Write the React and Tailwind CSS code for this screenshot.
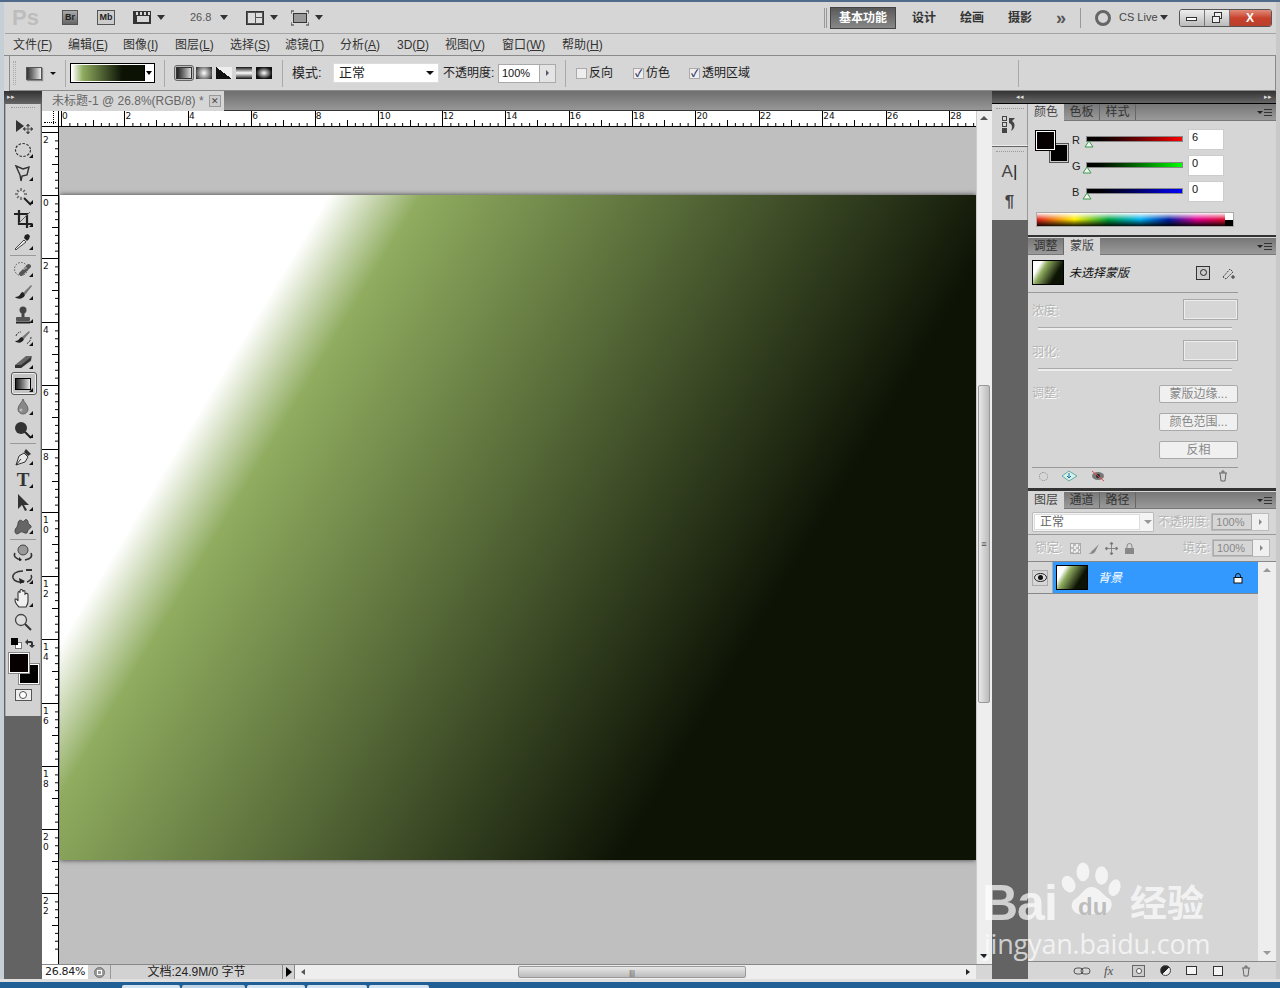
import React from "react";

const F = '[font-family:"Liberation_Sans","Noto_Sans_CJK_SC",sans-serif]';

function Caret({ className = "" }) {
  return <span className={"inline-block w-0 h-0 border-l-[4px] border-r-[4px] border-t-[5px] border-l-transparent border-r-transparent border-t-[#333] " + className} />;
}
function Mini() {
  return <span className="absolute right-[7px] bottom-[3px] w-0 h-0 border-l-[4px] border-l-transparent border-b-[4px] border-b-[#111]" />;
}
function Tool({ children, sel, noMini }) {
  return (
    <div className="relative h-[23px] w-full flex items-center justify-center">
      {sel && <div className="absolute left-[5px] top-0 w-[26px] h-[23px] rounded-[3px] border border-[#555] bg-[#c4c4c4] shadow-[inset_0_0_0_1px_#eee]" />}
      <div className="relative flex items-center justify-center">{children}</div>
      {!noMini && <Mini />}
    </div>
  );
}
const S = ({ children, w = 20, h = 20 }) => <svg width={w} height={h} viewBox={`0 0 ${w} ${h}`} fill="none">{children}</svg>;
const Sep = () => <div className="h-[4px] flex items-center mx-[4px]"><div className="w-full h-px bg-[#999]" /></div>;

function Toolbar() {
  return (
    <div className="w-[36px] ml-[1px] bg-[#d2d2d2] border-x border-[#aaa] flex flex-col h-[612px] shrink-0">
      <div className="h-[8px] mx-[5px] mt-[3px] border-t border-dotted border-[#999]" />
      <Tool noMini><S w={24}><path d="M5 3v12l8-6z" fill="#333" /><path d="M17 8v8M13 12h8M17 7l-1.500 2h3zM17 17l-1.500-2h3zM12 12l2-1.500v3zM22 12l-2-1.500v3z" stroke="#444" fill="#444" strokeWidth=".8" /></S></Tool>
      <Tool><S><ellipse cx="10" cy="10" rx="7.500" ry="6.500" stroke="#333" strokeWidth="1.200" strokeDasharray="2.500 1.500" /></S></Tool>
      <Tool><S><path d="M3 3l7 3 6-2-2 8-5 1-1 5-1-6z" stroke="#333" strokeWidth="1.400" /></S></Tool>
      <Tool><S><path d="M11 12l7 7" stroke="#222" strokeWidth="2" /><path d="M8 2v3M8 11v3M2 8h3M11 8h3M4 4l2 2M12 4l-2 2M4 12l2-2" stroke="#666" strokeWidth="1.500" /><circle cx="8" cy="8" r="2.500" fill="#ddd" /></S></Tool>
      <Tool><S><path d="M6 1v14h13M1 5h13v14" stroke="#222" strokeWidth="2.200" /><path d="M6 14L17 3" stroke="#666" /></S></Tool>
      <Tool><S><path d="M4 17l-1 1-1-1 1-1 8-8 2 2z" fill="#eee" stroke="#444" /><path d="M11 6l3 3 2-2 1-3-2-2-3 1z" fill="#222" /></S></Tool>
      <Sep />
      <Tool><S><circle cx="8" cy="10" r="6.500" stroke="#555" strokeDasharray="1.500 1.500" /><path d="M6 14L15 5a2.500 2.500 0 0 1 3 3L9 17a2.500 2.500 0 0 1-3-3z" fill="#555" /><circle cx="11" cy="10" r=".8" fill="#ddd" /><circle cx="13" cy="9" r=".8" fill="#ddd" /></S></Tool>
      <Tool><S><path d="M10 11L18 3l1 1-7 9z" fill="#777" /><path d="M10 10c-3 0-2 5-8 5 2 2 8 3 10-2z" fill="#222" /></S></Tool>
      <Tool><S><circle cx="10" cy="5" r="3.500" fill="#444" /><rect x="8.500" y="7" width="3" height="6" fill="#444" /><rect x="3" y="12" width="14" height="4" rx="1" fill="#555" /><rect x="3" y="16.500" width="14" height="2" fill="#222" /></S></Tool>
      <Tool><S><path d="M9 9L16 3l1 1-6 7z" fill="#777" /><path d="M9 9c-3 0-2 4-7 4 2 2 7 3 9-2z" fill="#222" /><path d="M3 8c1-3 3-4 5-4M18 9c0 3-2 6-5 7" stroke="#333" strokeDasharray="2 1" /></S></Tool>
      <Tool><S><path d="M2 14L13 5h6l-1 5L8 17H2z" fill="#666" /><path d="M2 14h6v3H2zM8 14L18 6v3L8 17z" fill="#333" /></S></Tool>
      <Tool sel><div className="w-[16px] h-[12px] border border-black bg-gradient-to-r from-[#222] to-[#eee]" /></Tool>
      <Tool><S><path d="M10 2c1 4 5 6 5 10a5 5 0 0 1-10 0c0-4 4-6 5-10z" fill="#888" stroke="#666" /><circle cx="8" cy="13" r="1.500" fill="#bbb" /></S></Tool>
      <Tool><S><circle cx="8" cy="8" r="6" fill="#333" /><path d="M12 12l6 6" stroke="#222" strokeWidth="2" /></S></Tool>
      <Sep />
      <Tool><S><path d="M3 18l3-9 5-3 4 4-3 5z" fill="#e8e8e8" stroke="#333" /><path d="M11 5l2-3 5 5-3 2z" fill="#333" /><path d="M3 18l5-6" stroke="#333" /></S></Tool>
      <Tool><span className="text-[19px] leading-none font-bold text-[#333] [font-family:'Liberation_Serif',serif]">T</span></Tool>
      <Tool><S><path d="M5 1v15l4-4 3 6 2-1-3-5h5z" fill="#333" /></S></Tool>
      <Tool><S><path d="M2 15c0-3 3-4 3-7s2-5 4-3 3-3 5-1 0 3 3 5-1 4-2 5 0 4-3 3-3-2-6 0-4 0-4-2z" fill="#666" stroke="#444" /></S></Tool>
      <Sep />
      <Tool noMini><S w={22}><circle cx="11" cy="7" r="5" fill="#999" stroke="#444" /><path d="M9 17C4 16 1 13 3 10M13 17c5-1 8-3 6-7" stroke="#333" strokeWidth="1.500" /><path d="M7 14l3 3-3 1z" fill="#222" /></S></Tool>
      <Tool><S w={24}><path d="M15 3h6v2h-6z" fill="#333" /><path d="M12 5C5 5 1 8 2 12c1 3 6 5 11 4M20 9c2 3-1 6-4 7" stroke="#333" strokeWidth="1.500" /><path d="M8 12l6 3-5 3z" fill="#222" /></S></Tool>
      <Tool><S><path d="M6 18c-2-2-4-5-4-7s2-1 3 1V4c0-2 2-2 2 0V2c0-2 2-2 3 0v1c0-2 2-2 2 0v2c1-1 3-1 3 1v6c0 3-1 4-2 6z" fill="#f0f0f0" stroke="#333" strokeWidth="1.100" /></S></Tool>
      <Tool noMini><S><circle cx="8" cy="8" r="5.500" fill="#ddd" stroke="#444" strokeWidth="1.300" /><path d="M12 12l6 6" stroke="#333" strokeWidth="2" /></S></Tool>
      <div className="relative h-[20px] flex items-center justify-between px-[5px]">
        <div className="relative w-[11px] h-[11px]"><div className="absolute right-0 bottom-0 w-[7px] h-[7px] bg-white border border-[#777]" /><div className="absolute left-0 top-0 w-[7px] h-[7px] bg-black" /></div>
        <S w={12} h={12}><path d="M2 5l3-3v2h3a2 2 0 0 1 2 2v2h2l-3 3-3-3h2V6H5v2z" fill="#333" /></S>
      </div>
      <div className="relative h-[32px]">
        <div className="absolute left-[13px] top-[11px] w-[20px] h-[20px] bg-black border border-white outline outline-1 outline-[#888]" />
        <div className="absolute left-[3px] top-0 w-[20px] h-[20px] bg-[#060000] border border-white outline outline-1 outline-[#888]" />
      </div>
      <div className="h-[20px] flex items-center justify-center">
        <div className="w-[17px] h-[12px] bg-[#eee] border border-[#555] flex items-center justify-center"><div className="w-[8px] h-[8px] rounded-full border border-[#555] bg-white" /></div>
      </div>
    </div>
  );
}

function TopRuler() {
  const nums = [0, 2, 4, 6, 8, 10, 12, 14, 16, 18, 20, 22, 24, 26, 28];
  return (
    <div className="flex h-[16px] bg-white border-b border-black overflow-hidden pl-[2px]">
      {nums.map((n) => (
        <div key={n} className="relative shrink-0 w-[63.45px] h-full border-l border-black">
          <span className="absolute left-0 top-0 text-[9px] leading-[10px] text-[#111] [font-family:'DejaVu_Sans',sans-serif]">{n}</span>
          <svg className="absolute left-0 bottom-0" width="63" height="6" viewBox="0 0 63.600 6">
            {[1, 2, 3, 4, 5, 6, 7].map((i) => <line key={i} x1={i * 7.95} x2={i * 7.95} y1={i === 4 ? 0 : 3} y2="6" stroke="#000" />)}
          </svg>
        </div>
      ))}
    </div>
  );
}
function LeftRuler() {
  const nums = [["2"], ["0"], ["2"], ["4"], ["6"], ["8"], ["1", "0"], ["1", "2"], ["1", "4"], ["1", "6"], ["1", "8"], ["2", "0"], ["2", "2"]];
  return (
    <div className="w-[17px] shrink-0 bg-white border-r border-black overflow-hidden flex flex-col pt-[4.6px]">
      {nums.map((n, k) => (
        <div key={k} className="relative shrink-0 h-[63.45px] border-t border-black">
          <div className="absolute left-[1px] top-[2px] text-[9px] leading-[10px] text-[#111] [font-family:'DejaVu_Sans',sans-serif]">
            {n.map((d, i) => <div key={i}>{d}</div>)}
          </div>
          <svg className="absolute right-0 top-0" width="6" height="63" viewBox="0 0 6 63.600">
            {[1, 2, 3, 4, 5, 6, 7].map((i) => <line key={i} y1={i * 7.95} y2={i * 7.95} x1={i === 4 ? 0 : 3} x2="6" stroke="#000" />)}
          </svg>
        </div>
      ))}
    </div>
  );
}

function Doc() {
  return (
    <div className="w-[950px] shrink-0 flex flex-col min-h-0">
      <div className="h-[20px] flex bg-gradient-to-b from-[#6e6e6e] to-[#979797] border-b border-[#333]">
        <div className="w-[182px] h-[20px] bg-[#d6d6d6] flex items-center pl-[10px] text-[12px] text-[#666] whitespace-nowrap">
          未标题-1 @ 26.8%(RGB/8) *
          <span className="ml-[5px] w-[12px] h-[12px] border border-[#999] bg-[#ccc] flex items-center justify-center text-[9px] leading-none text-[#444]">✕</span>
        </div>
      </div>
      <div className="flex-1 flex min-h-0">
        <div className="w-[934px] flex flex-col min-h-0">
          <div className="flex h-[16px] shrink-0">
            <div className="w-[17px] shrink-0 bg-white border-r border-b border-black relative">
              <div className="absolute left-[11px] top-0 h-[13px] border-l border-dotted border-black" />
              <div className="absolute left-[2px] top-[11px] w-[12px] border-t border-dotted border-black" />
            </div>
            <div className="flex-1 min-w-0"><TopRuler /></div>
          </div>
          <div className="flex-1 flex min-h-0">
            <LeftRuler />
            <div className="flex-1 min-w-0 bg-[#bfbfbf] pt-[68px] pl-px overflow-hidden">
              <div className="h-[665px] bg-[linear-gradient(121deg,#ffffff_20.5%,#8fac5f_27.5%,#0d1305_73%,#0d1305_100%)] shadow-[0_0_5px_rgba(0,0,0,0.7)]" />
            </div>
          </div>
          <div className="h-[15px] shrink-0 flex border-t border-[#888] bg-[#d2d2d2] text-[12px] text-[#222]">
            <div className="w-[46px] pl-[3px] bg-white leading-[14px] text-[11px] [font-family:'DejaVu_Sans',sans-serif] tracking-[-0.3px]">26.84%</div>
            <div className="w-[23px] flex items-center justify-center border-r border-[#999]"><div className="w-[11px] h-[11px] rounded-full bg-[#999] border border-[#777] flex items-center justify-center"><div className="w-[5px] h-[5px] border border-white" /></div></div>
            <div className="w-[171px] text-center leading-[14px] whitespace-nowrap">文档:24.9M/0 字节</div>
            <div className="w-[13px] flex items-center justify-center border-x border-[#888]"><span className="w-0 h-0 border-y-[5px] border-y-transparent border-l-[6px] border-l-black" /></div>
            <div className="flex-1 bg-[#eee] relative flex items-center">
              <span className="ml-[6px] w-0 h-0 border-y-[3px] border-y-transparent border-r-[4px] border-r-[#555]" />
              <div className="absolute left-[223px] top-[1px] w-[228px] h-[12px] rounded-[2px] border border-[#999] bg-gradient-to-b from-[#e8e8e8] to-[#bbb] flex items-center justify-center text-[7px] leading-none text-[#444]">|||</div>
              <span className="absolute right-[6px] w-0 h-0 border-y-[3px] border-y-transparent border-l-[4px] border-l-[#222]" />
            </div>
          </div>
        </div>
        <div className="w-[16px] shrink-0 flex flex-col min-h-0">
          <div className="flex-1 bg-[#eee] relative border-l border-[#ccc]">
            <span className="absolute left-[3px] top-[5px] w-0 h-0 border-x-[4px] border-x-transparent border-b-[4px] border-b-[#555]" />
            <div className="absolute left-[1px] top-[274px] w-[12px] h-[318px] rounded-[2px] border border-[#999] bg-gradient-to-r from-[#e8e8e8] to-[#bbb] flex items-center justify-center text-[9px] leading-none text-[#444]">≡</div>
            <span className="absolute left-[3px] bottom-[6px] w-0 h-0 border-x-[4px] border-x-transparent border-t-[4px] border-t-[#222]" />
          </div>
          <div className="h-[15px] bg-[#d6d6d6] border-t border-[#888]" />
        </div>
      </div>
    </div>
  );
}

function PanelMenu() {
  return (
    <div className="ml-auto mr-[4px] flex items-center gap-px">
      <span className="w-0 h-0 border-x-[3px] border-x-transparent border-t-[3px] border-t-[#222]" />
      <span className="w-[8px] h-[7px] border-y border-[#333] relative"><span className="absolute left-0 right-0 top-[2px] h-px bg-[#333]" /></span>
    </div>
  );
}
function Tabs({ items, active }) {
  return (
    <div className="h-[17px] shrink-0 flex bg-gradient-to-b from-[#777] to-[#9a9a9a] border-b border-[#777] text-[12px]">
      {items.map((t, i) => (
        <div key={t} className={"w-[36px] leading-[16px] text-center " + (i === active ? "bg-[#d6d6d6] text-[#444] h-[17px]" : "text-[#333] border-r border-[#666]")}>{t}</div>
      ))}
      <PanelMenu />
    </div>
  );
}
const Dis = "text-[12px] text-[#b4b4b4] [text-shadow:1px_1px_0_#fff]";

function Slider({ label, color, pos, val }) {
  return (
    <div className="flex items-center h-[26px]">
      <span className="w-[11px] text-[11px] text-[#222] mt-[2px]">{label}</span>
      <div className="relative ml-[3px] w-[97px] h-[6px] border border-[#888]">
        <div className={"w-full h-full " + color} />
        <svg className={"absolute top-[3px] " + pos} width="10" height="8" viewBox="0 0 10 8"><path d="M5 1L9 7H1z" fill="#f4f4f4" stroke="#3a9a4a" /></svg>
      </div>
      <div className="ml-[5px] w-[36px] h-[21px] bg-white border border-[#ccc] text-[11px] leading-[15px] pl-[3px] text-[#111]">{val}</div>
    </div>
  );
}
function MaskBtn({ children }) {
  return <div className="w-[79px] h-[18px] rounded-[2px] border border-[#aaa] bg-[#f0f0f0] text-center text-[12px] leading-[16px] text-[#888]">{children}</div>;
}
function Thumb({ className }) {
  return <div className={"h-[25px] w-[32px] border border-black bg-[linear-gradient(121deg,#ffffff_20%,#8fac5f_35%,#0c1204_72%)] " + className} />;
}

function Panels() {
  return (
    <div className="w-[248px] shrink-0 flex flex-col min-h-0 text-[#333]">
      <div className="h-[133px] shrink-0 flex flex-col bg-[#d6d6d6] border-b-[2px] border-[#333]">
        <Tabs items={["颜色", "色板", "样式"]} active={0} />
        <div className="flex pt-[5px] pl-[8px]">
          <div className="relative w-[32px] h-[34px] mt-[5px]">
            <div className="absolute left-[14px] top-[13px] w-[18px] h-[18px] bg-black border border-[#ccc] outline outline-1 outline-[#555]" />
            <div className="absolute left-0 top-0 w-[19px] h-[19px] bg-[#060000] border border-white outline outline-1 outline-black" />
          </div>
          <div className="ml-[4px] flex flex-col">
            <Slider label="R" val="6" pos="left-[-3px]" color="bg-gradient-to-r from-black to-[#ff0000]" />
            <Slider label="G" val="0" pos="left-[-5px]" color="bg-gradient-to-r from-black to-[#00ff00]" />
            <Slider label="B" val="0" pos="left-[-5px]" color="bg-gradient-to-r from-black to-[#0000ff]" />
          </div>
        </div>
        <div className="ml-[8px] mt-[8px] w-[198px] h-[15px] flex border border-[#aaa]">
          <div className="flex-1 bg-[linear-gradient(to_bottom,rgba(255,255,255,0.95),rgba(255,255,255,0)_50%,rgba(0,0,0,0)_50%,rgba(0,0,0,0.9)),linear-gradient(to_right,#e02020,#ffee00_20%,#00a040_38%,#00b0f0_55%,#0020a0_70%,#e00090_85%,#e01030)]" />
          <div className="w-[8px] flex flex-col"><div className="h-1/2 bg-white" /><div className="h-1/2 bg-black" /></div>
        </div>
      </div>
      <div className="h-[253px] shrink-0 mt-px flex flex-col bg-[#d6d6d6] border-b-[3px] border-[#333]">
        <Tabs items={["调整", "蒙版"]} active={1} />
        <div className="flex items-center h-[38px] pb-[2px] pl-[4px] border-b border-[#999] w-[210px]">
          <Thumb className="" />
          <span className="ml-[5px] text-[12px] italic text-[#111]">未选择蒙版</span>
          <div className="ml-[auto] mr-[3px] flex items-center gap-[11px]">
            <div className="w-[14px] h-[14px] border border-[#333] bg-[#ccc] flex items-center justify-center"><div className="w-[7px] h-[7px] rounded-full border border-[#222]" /></div>
            <S w={14} h={14}><path d="M2 11L9 3l3 3-7 7z" stroke="#444" strokeDasharray="2 1" /><path d="M10 11h4M12 9v4" stroke="#333" /></S>
          </div>
        </div>
        <div className="flex flex-col pl-[4px] w-[210px]">
          <div className="flex items-center justify-between h-[21px] mt-[6px]">
            <span className={Dis + " pt-[2px]"}>浓度:</span>
            <div className="w-[55px] h-[21px] border border-[#aaa] shadow-[inset_0_0_0_1px_#eee]" />
          </div>
          <div className="h-[3px] ml-[6px] w-[194px] mt-[7px] bg-[#eee] border-t border-[#aaa]" />
          <div className="flex items-center justify-between h-[21px] mt-[10px]">
            <span className={Dis + " pt-[2px]"}>羽化:</span>
            <div className="w-[55px] h-[21px] border border-[#aaa] shadow-[inset_0_0_0_1px_#eee]" />
          </div>
          <div className="h-[3px] ml-[6px] w-[194px] mt-[7px] bg-[#eee] border-t border-[#aaa]" />
          <div className="flex justify-between mt-[14px]">
            <span className={Dis + " leading-[16px]"}>调整:</span>
            <div className="flex flex-col gap-[10px]">
              <MaskBtn>蒙版边缘...</MaskBtn>
              <MaskBtn>颜色范围...</MaskBtn>
              <MaskBtn>反相</MaskBtn>
            </div>
          </div>
          <div className="h-[17px] mt-[8px] border-t border-[#999] flex items-center pl-[7px] gap-[13px] relative">
            <span className="w-[9px] h-[9px] rounded-full border border-dotted border-[#888]" />
            <S w={17} h={12}><path d="M1 6l7-5 8 5-8 5z" fill="#d8efe6" stroke="#6aa" /><path d="M8 3v5M6 6l2 2 2-2" stroke="#17a" /></S>
            <S w={14} h={12}><ellipse cx="7" cy="6" rx="6" ry="4" fill="#777" /><circle cx="7" cy="6" r="2" fill="#222" /><path d="M1 1l12 10" stroke="#e44" /></S>
            <span className="absolute right-[9px] top-[2px]"><S w={12} h={12}><path d="M2 3h8M3 3l1 8h4l1-8M5 3V1h2v2" stroke="#666" /></S></span>
          </div>
        </div>
      </div>
      <div className="flex-1 min-h-0 flex flex-col bg-[#d6d6d6] mt-px">
        <Tabs items={["图层", "通道", "路径"]} active={0} />
        <div className="h-[26px] flex items-center pl-[4px] border-b border-[#999]">
          <div className="w-[122px] h-[20px] flex items-center bg-[#f4f4f4] border border-[#bbb] rounded-[1px]">
            <span className="w-[106px] h-[16px] ml-px bg-white border border-[#ddd] text-[12px] leading-[15px] pl-[5px] text-[#666]">正常</span>
            <span className="ml-[4px] w-0 h-0 border-x-[4px] border-x-transparent border-t-[4px] border-t-[#999]" />
          </div>
          <span className={Dis + " ml-[4px] whitespace-nowrap"}>不透明度:</span>
          <div className="ml-[2px] w-[58px] h-[18px] flex border border-[#bbb] bg-[#f0f0f0]">
            <span className="flex-1 border border-[#aaa] text-[11px] leading-[15px] pl-[3px] bg-[#d6d6d6] text-[#888]">100%</span>
            <span className="w-[16px] flex items-center justify-center"><span className="w-0 h-0 border-y-[3px] border-y-transparent border-l-[3px] border-l-[#888]" /></span>
          </div>
        </div>
        <div className="h-[27px] flex items-center pl-[7px] border-b border-[#888]">
          <span className={Dis + " whitespace-nowrap"}>锁定:</span>
          <div className="ml-[8px] w-[11px] h-[11px] border border-[#aaa] bg-[repeating-conic-gradient(#bbb_0_25%,#eee_0_50%)] bg-[length:5px_5px]" />
          <span className="ml-[6px]"><S w={13} h={13}><path d="M1 12c3 0 3-3 5-4l6-6-4 8c-2 2-4 2-7 2z" fill="#888" /></S></span>
          <span className="ml-[5px]"><S w={13} h={13}><path d="M6.500 1v11M1 6.500h11M6.500 0L5 2h3zM6.500 13L5 11h3zM0 6.500l2-1.500v3zM13 6.500l-2-1.500v3z" stroke="#777" fill="#777" strokeWidth=".8" /></S></span>
          <span className="ml-[6px]"><S w={11} h={13}><path d="M3 6V4a2.500 2.500 0 0 1 5 0v2" stroke="#888" /><rect x="1" y="6" width="9" height="6" fill="#888" /></S></span>
          <span className={Dis + " ml-[auto] whitespace-nowrap"}>填充:</span>
          <div className="ml-[2px] mr-[6px] w-[58px] h-[18px] flex border border-[#bbb] bg-[#f0f0f0]">
            <span className="flex-1 border border-[#aaa] text-[11px] leading-[15px] pl-[3px] bg-[#d6d6d6] text-[#888]">100%</span>
            <span className="w-[16px] flex items-center justify-center"><span className="w-0 h-0 border-y-[3px] border-y-transparent border-l-[3px] border-l-[#888]" /></span>
          </div>
        </div>
        <div className="flex-1 min-h-0 flex">
          <div className="flex-1 flex flex-col">
            <div className="h-[32px] flex border-b border-[#888]">
              <div className="w-[25px] border-r border-[#aaa] flex items-center justify-center">
                <div className="w-[16px] h-[16px] border border-[#aaa] flex items-center justify-center">
                  <S w={13} h={9}><ellipse cx="6.500" cy="4.500" rx="6" ry="4" fill="#ddd" stroke="#222" /><circle cx="6.500" cy="4.500" r="2.500" fill="#111" /></S>
                </div>
              </div>
              <div className="flex-1 bg-[#3399ff] flex items-center pl-[3px]">
                <Thumb className="border-[1.500px]" />
                <span className="ml-[10px] text-[12px] italic text-white">背景</span>
                <span className="ml-auto mr-[15px]"><S w={10} h={12}><path d="M2.500 6V4a2.500 2.500 0 0 1 5 0v2" stroke="#111" /><rect x="1" y="5.500" width="8" height="5.500" fill="#fff" stroke="#111" /></S></span>
              </div>
            </div>
          </div>
          <div className="w-[18px] bg-[#eee] relative">
            <span className="absolute left-[5px] top-[6px] w-0 h-0 border-x-[4px] border-x-transparent border-b-[4px] border-b-[#999]" />
            <span className="absolute left-[5px] bottom-[6px] w-0 h-0 border-x-[4px] border-x-transparent border-t-[4px] border-t-[#999]" />
          </div>
        </div>
        <div className="h-[18px] shrink-0 border-t border-[#888] flex items-center pl-[45px] gap-[13px]">
          <S w={18} h={10}><rect x="1" y="2" width="9" height="6" rx="3" stroke="#555" /><rect x="8" y="2" width="9" height="6" rx="3" stroke="#555" /></S>
          <span className="w-[15px] text-[13px] italic leading-none text-[#555] [font-family:'Liberation_Serif',serif]">fx</span>
          <div className="w-[13px] h-[12px] border border-[#666] bg-[#ccc] flex items-center justify-center"><div className="w-[6px] h-[6px] rounded-full bg-white border border-[#555]" /></div>
          <div className="w-[14px] h-[11px] ml-[2px]"><div className="w-[11px] h-[11px] rounded-full border border-[#444] bg-[linear-gradient(135deg,#222_50%,#eee_50%)]" /></div>
          <div className="w-[11px] h-[9px] -ml-[1px] bg-[#f4f4f4] border border-[#333]" />
          <div className="w-[10px] h-[10px] ml-[3px] bg-[#f4f4f4] border border-[#333]" />
          <span className="ml-[4px]"><S w={12} h={12}><path d="M2 3h8M3 3l1 8h4l1-8M5 3V1h2v2" stroke="#666" /></S></span>
        </div>
      </div>
    </div>
  );
}

function Iconic() {
  return (
    <div className="w-[36px] shrink-0 flex flex-col bg-[#636363]">
      <div className="h-[42px] bg-[#d4d4d4] border-b border-[#eee] border-r border-r-[#999] flex flex-col items-center">
        <div className="w-[28px] mt-[4px] border-t border-dotted border-[#999]" />
        <div className="mt-[7px] flex items-center gap-px">
          <div className="flex flex-col gap-px"><div className="w-[5px] h-[5px] border border-[#444]" /><div className="w-[5px] h-[5px] border border-[#444]" /><div className="w-[5px] h-[5px] bg-[#444]" /></div>
          <S w={9} h={15}><path d="M1 1h6L4 4c4 2 3 8-1 10 2-4 1-7-2-8z" fill="#444" /></S>
        </div>
      </div>
      <div className="h-[73px] bg-[#d4d4d4] mt-px border-r border-[#999] flex flex-col items-center">
        <div className="w-[28px] mt-[4px] border-t border-dotted border-[#999]" />
        <div className="mt-[10px] text-[17px] leading-[20px] text-[#444]">A<span className="font-light text-[#222]">|</span></div>
        <div className="mt-[10px] text-[17px] leading-[20px] font-bold text-[#444]">¶</div>
      </div>
    </div>
  );
}

function Watermark() {
  return (
    <div className="absolute left-[982px] top-[850px] w-[232px] h-[112px] text-white/70 pointer-events-none">
      <div className="absolute left-0 top-[34px] text-[50px] leading-[38px] font-bold tracking-[-1px] [font-family:'Liberation_Sans',sans-serif]">Bai</div>
      <svg className="absolute left-[78px] top-[2px]" width="66" height="70" viewBox="0 0 92 80">
        <g fill="#fff" fillOpacity=".7">
          <ellipse cx="12" cy="36" rx="9" ry="12" transform="rotate(-25 12 36)" />
          <ellipse cx="32" cy="19" rx="9" ry="13" />
          <ellipse cx="58" cy="24" rx="9" ry="13" />
          <ellipse cx="76" cy="41" rx="8" ry="12" transform="rotate(20 76 41)" />
          <path d="M44 40c10 0 14 10 24 16 8 5 4 22-10 22H30C16 78 12 62 22 56c8-5 12-16 22-16z" />
        </g>
      </svg>
      <div className="absolute left-[96px] top-[44px] text-[24px] leading-[26px] font-bold text-[#bdbdbd] [font-family:'Liberation_Sans',sans-serif]">du</div>
      <div className="absolute left-[148px] top-[33px] text-[37px] leading-[44px] font-bold">经验</div>
      <div className="absolute left-[2px] top-[78px] text-[27px] leading-[32px] [font-family:'Open_Sans',sans-serif] tracking-[-0.2px] whitespace-nowrap">jingyan.baidu.com</div>
    </div>
  );
}

export default function App() {
  return (
    <div className={"relative w-[1280px] h-[988px] overflow-hidden flex flex-col bg-[#d6d6d6] " + F}>
      <div className="h-[2px] shrink-0 bg-[#4f6a8a]" />
      <div className="flex-1 min-h-0 flex">
        <div className="w-[4px] shrink-0 bg-[#c6ced6]" />
        <div className="flex-1 min-w-0 flex flex-col">
          {/* title bar */}
          <div className="h-[32px] shrink-0 border-b border-[#a4a4a4] flex items-center text-[#444] ml-px">
            <span className="ml-[7px] w-[24px] text-[22px] leading-[24px] font-bold text-[#bdbdbd]">Ps</span>
            <div className="ml-[26px] w-[16px] h-[15px] bg-gradient-to-b from-[#aaa] to-[#666] border border-[#555] text-[9px] leading-[13px] text-center text-[#222] font-bold">Br</div>
            <div className="ml-[19px] w-[18px] h-[15px] bg-[#ccc] border border-[#555] text-[9px] leading-[13px] text-center text-[#222] font-bold">Mb</div>
            <div className="ml-[18px] w-[18px] h-[13px] border border-[#333] bg-[repeating-linear-gradient(90deg,#333_0_2px,transparent_2px_4px)]"><div className="mt-[3px] ml-[2px] h-[8px] w-[14px] bg-[#d6d6d6] border border-[#333]" /></div>
            <Caret className="ml-[6px]" />
            <span className="ml-[25px] w-[21px] text-[11px] text-[#555]">26.8</span>
            <Caret className="ml-[9px]" />
            <div className="ml-[18px] w-[18px] h-[14px] border border-[#333] bg-[#555] grid grid-cols-2 gap-px p-px"><div className="bg-[#ddd] row-span-2" /><div className="bg-[#ddd]" /><div className="bg-[#ddd]" /></div>
            <Caret className="ml-[6px]" />
            <span className="ml-[13px]"><S w={18} h={16}><path d="M0 4V1h3M15 1h3v3M18 12v3h-3M3 15H0v-3" stroke="#333" /><rect x="2.500" y="3.500" width="13" height="9" fill="#999" stroke="#333" /></S></span>
            <Caret className="ml-[6px]" />
            <div className="ml-[501px] w-[3px] h-[20px] border-x border-[#999]" />
            <div className="ml-[3px] w-[66px] h-[22px] flex items-center justify-center bg-gradient-to-b from-[#5a5a5a] to-[#888] border border-[#444] text-white font-bold text-[12px]">基本功能</div>
            <span className="ml-[16px] w-[48px] text-[12px] font-bold text-[#333]">设计</span>
            <span className="w-[48px] text-[12px] font-bold text-[#333]">绘画</span>
            <span className="w-[48px] text-[12px] font-bold text-[#333]">摄影</span>
            <span className="w-[22px] text-[18px] leading-[18px] font-bold text-[#555]">»</span>
            <div className="ml-[2px] h-[20px] w-px bg-[#999]" />
            <div className="ml-[14px] w-[16px] h-[16px] rounded-full border-[3.500px] border-[#666]" />
            <span className="ml-[8px] text-[11px] text-[#444] whitespace-nowrap">CS Live</span>
            <Caret className="ml-[2px]" />
            <div className="ml-[11px] w-[93px] h-[18px] flex rounded-[3px] border border-[#555] overflow-hidden">
              <div className="w-[25px] flex items-center justify-center border-r border-[#777] bg-gradient-to-b from-[#eee] to-[#bbb]"><div className="w-[11px] h-[4px] mt-[3px] bg-white border border-[#333]" /></div>
              <div className="w-[25px] flex items-center justify-center border-r border-[#777] bg-gradient-to-b from-[#eee] to-[#bbb]"><S w={12} h={11}><rect x="3.500" y=".5" width="7" height="6" fill="#eee" stroke="#333" /><rect x="1.500" y="4.500" width="7" height="6" fill="#eee" stroke="#333" /></S></div>
              <div className="flex-1 flex items-center justify-center bg-gradient-to-b from-[#e08a78] via-[#c8412c] to-[#b8402c] text-white font-bold text-[12px] leading-none">X</div>
            </div>
          </div>
          {/* menu */}
          <div className="h-[22px] shrink-0 flex items-center pl-[9px] text-[12px] text-[#333] border-b border-[#8a8a8a] whitespace-nowrap">
            <span className="w-[55px]">文件(<u>F</u>)</span>
            <span className="w-[55px]">编辑(<u>E</u>)</span>
            <span className="w-[52px]">图像(<u>I</u>)</span>
            <span className="w-[55px]">图层(<u>L</u>)</span>
            <span className="w-[55px]">选择(<u>S</u>)</span>
            <span className="w-[55px]">滤镜(<u>T</u>)</span>
            <span className="w-[57px]">分析(<u>A</u>)</span>
            <span className="w-[48px]">3D(<u>D</u>)</span>
            <span className="w-[57px]">视图(<u>V</u>)</span>
            <span className="w-[60px]">窗口(<u>W</u>)</span>
            <span>帮助(<u>H</u>)</span>
          </div>
          {/* options */}
          <div className="h-[35px] shrink-0 flex items-center ml-[5px] border-x border-b border-[#8a8a8a] text-[12px] text-[#222]">
            <div className="ml-[3px] w-[3px] h-[24px] border-x border-dotted border-[#aaa]" />
            <div className="ml-[10px] w-[16px] h-[13px] border border-[#555] bg-gradient-to-r from-[#333] to-[#eee] shadow-[1px_1px_1px_#888]" />
            <Caret className="ml-[8px] !border-t-[3px] !border-x-[3px] !border-t-[#111]" />
            <div className="ml-[9px] w-px h-[27px] bg-[#aaa]" />
            <div className="ml-[4px] w-[85px] h-[20px] flex border border-black bg-white p-px">
              <div className="w-[72px] bg-[linear-gradient(90deg,#ffffff,#8fac5f_15%,#0c1204_70%)]" />
              <div className="flex-1 flex items-center justify-center border-l border-black"><span className="w-0 h-0 border-x-[3px] border-x-transparent border-t-[4px] border-t-black" /></div>
            </div>
            <div className="ml-[9px] w-px h-[27px] bg-[#aaa]" />
            <div className="ml-[9px] flex items-center gap-[4px]">
              <div className="p-[1px] -mr-[2px] border border-[#666] rounded-[3px] bg-[#bbb]"><div className="w-[16px] h-[12px] bg-gradient-to-r from-[#222] to-[#ddd] border border-[#333]" /></div>
              <div className="w-[16px] h-[12px] bg-[radial-gradient(circle,#fff,#222)]" />
              <div className="w-[16px] h-[12px] bg-[linear-gradient(to_top_right,#111_50%,#eee_50%)]" />
              <div className="w-[16px] h-[12px] bg-[linear-gradient(to_bottom,#111,#fff,#111)]" />
              <div className="w-[16px] h-[12px] bg-[radial-gradient(ellipse_at_center,#fff,#111_70%)]" />
            </div>
            <div className="ml-[10px] w-px h-[27px] bg-[#aaa]" />
            <span className="ml-[9px] w-[41px] text-[13px]">模式:</span>
            <div className="w-[106px] h-[20px] bg-white flex items-center rounded-[1px] border border-[#ddd]">
              <span className="ml-[5px] text-[13px]">正常</span>
              <span className="ml-auto mr-[4px] w-0 h-0 border-x-[4px] border-x-transparent border-t-[4px] border-t-[#111]" />
            </div>
            <span className="ml-[4px] w-[55px] text-[12px] whitespace-nowrap">不透明度:</span>
            <div className="w-[58px] h-[19px] flex border border-[#aaa] bg-white">
              <span className="flex-1 text-[11px] leading-[17px] pl-[3px] text-[#111]">100%</span>
              <span className="w-[16px] bg-[#e4e4e4] border-l border-[#aaa] flex items-center justify-center"><span className="w-0 h-0 border-y-[3px] border-y-transparent border-l-[3px] border-l-[#557]" /></span>
            </div>
            <div className="ml-[9px] w-px h-[27px] bg-[#aaa]" />
            <div className="ml-[10px] w-[11px] h-[11px] border border-[#aaa] bg-[#eee]" />
            <span className="ml-[2px] w-[44px]">反向</span>
            <div className="w-[11px] h-[11px] border border-[#aaa] bg-[#eee] text-[10px] leading-[9px] text-center text-[#336] font-bold">✓</div>
            <span className="ml-[2px] w-[43px]">仿色</span>
            <div className="w-[11px] h-[11px] border border-[#aaa] bg-[#eee] text-[10px] leading-[9px] text-center text-[#336] font-bold">✓</div>
            <span className="ml-[2px] w-[64px] whitespace-nowrap">透明区域</span>
            <div className="ml-[252px] w-px h-[27px] bg-[#aaa]" />
          </div>
          {/* main */}
          <div className="flex-1 min-h-0 flex">
            <div className="w-[38px] shrink-0 flex flex-col bg-[#636363]">
              <div className="h-[13px] shrink-0 bg-gradient-to-b from-[#333] to-[#666] pl-[3px] text-[7px] leading-[12px] text-[#ddd]">▸▸</div>
              <Toolbar />
            </div>
            <Doc />
            <div className="flex-1 min-w-0 flex flex-col min-h-0">
              <div className="h-[13px] shrink-0 bg-gradient-to-b from-[#333] to-[#666] flex justify-between px-[4px] text-[7px] leading-[12px] text-[#ddd] border-b border-black">
                <span className="ml-[20px]">◂◂</span><span>▸▸</span>
              </div>
              <div className="flex-1 min-h-0 flex">
                <Iconic />
                <Panels />
              </div>
            </div>
          </div>
        </div>
        <div className="w-[4px] shrink-0 bg-[#c9c9c9]" />
      </div>
      <div className="h-[3px] shrink-0 bg-[#e0e0e0]" />
      <div className="h-[6px] shrink-0 bg-[#1f5f96] flex pl-[122px] pt-[3px] gap-[2px]">
        <div className="w-[58px] bg-[#d3e3ef] rounded-t-[2px]" />
        <div className="w-[63px] bg-[#bcd4e6] rounded-t-[2px]" />
        <div className="w-[58px] bg-[#d3e3ef] rounded-t-[2px]" />
        <div className="w-[60px] bg-[#d3e3ef] rounded-t-[2px]" />
        <div className="w-[60px] bg-[#d3e3ef] rounded-t-[2px]" />
      </div>
      <Watermark />
    </div>
  );
}
